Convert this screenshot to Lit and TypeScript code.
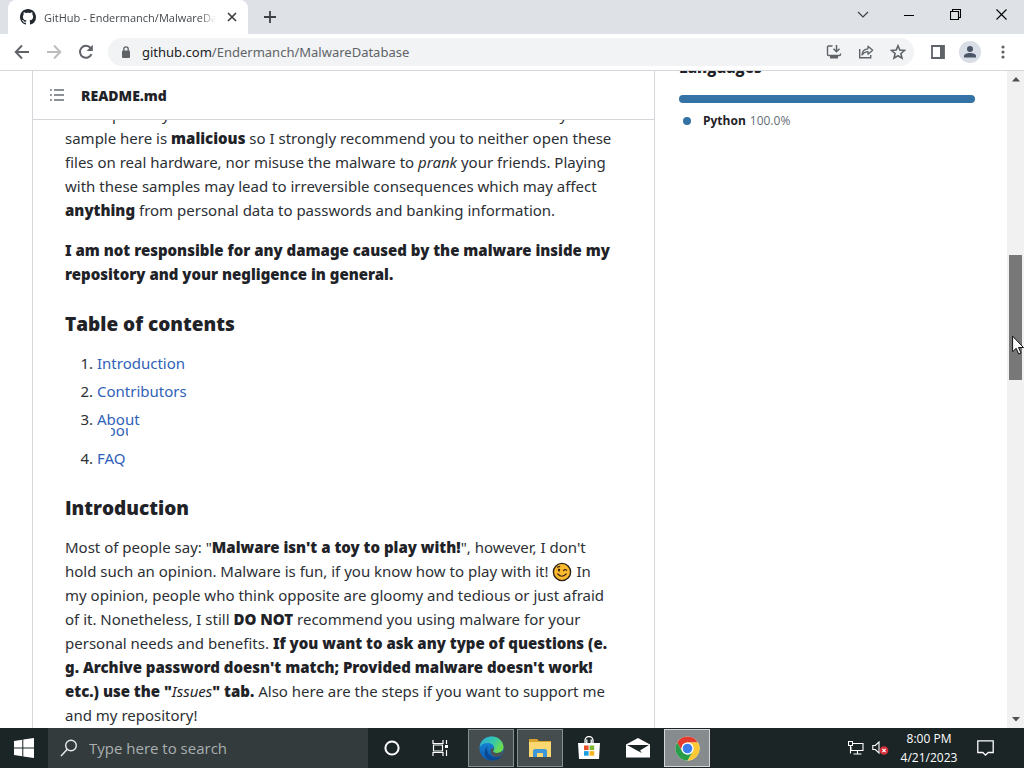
import { LitElement, html, css, svg } from "lit";
import { customElement } from "lit/decorators.js";

const icon = (w: number, h: number, body: unknown) =>
  html`<svg width=${w} height=${h} viewBox="0 0 ${w} ${h}" fill="none" aria-hidden="true">${body}</svg>`;

const icons = {
  github: html`<svg width="16" height="16" viewBox="0 0 16 16" aria-hidden="true"><path fill="#24292f" d="M8 0C3.58 0 0 3.58 0 8c0 3.54 2.29 6.53 5.47 7.59.4.07.55-.17.55-.38 0-.19-.01-.82-.01-1.49-2.01.37-2.53-.49-2.69-.94-.09-.23-.48-.94-.82-1.13-.28-.15-.68-.52-.01-.53.63-.01 1.08.58 1.23.82.72 1.21 1.87.87 2.33.66.07-.52.28-.87.51-1.07-1.78-.2-3.64-.89-3.64-3.95 0-.87.31-1.59.82-2.15-.08-.2-.36-1.02.08-2.12 0 0 .67-.21 2.2.82.64-.18 1.32-.27 2-.27s1.36.09 2 .27c1.53-1.04 2.2-.82 2.2-.82.44 1.1.16 1.92.08 2.12.51.56.82 1.27.82 2.15 0 3.07-1.87 3.75-3.65 3.95.29.25.54.73.54 1.48 0 1.07-.01 1.93-.01 2.2 0 .21.15.46.55.38A8.01 8.01 0 0 0 16 8c0-4.42-3.58-8-8-8z"/></svg>`,
  close: icon(10, 10, svg`<path d="M1 1l8 8M9 1l-8 8" stroke="#3c4043" stroke-width="1.7"/>`),
  plus: icon(12, 12, svg`<path d="M6 0v12M0 6h12" stroke="#3c4043" stroke-width="1.8"/>`),
  chevron: icon(12, 8, svg`<path d="M1 1l5 5 5-5" stroke="#3c4043" stroke-width="1.2"/>`),
  min: icon(10, 10, svg`<path d="M0 5.500h10" stroke="#000"/>`),
  restore: icon(11, 11, svg`<path d="M.5 2.500h8v8h-8zM2.500 2.500v-2h8v8h-2" stroke="#000" stroke-width="1.1"/>`),
  winClose: icon(11, 11, svg`<path d="M.5.5l10 10M10.500.5l-10 10" stroke="#000" stroke-width="1.1"/>`),
  back: icon(16, 16, svg`<path d="M15 8H2M8 1.500L1.700 8 8 14.500" stroke="#5f6368" stroke-width="1.900"/>`),
  forward: icon(16, 16, svg`<path d="M1 8h13M8 1.500L14.300 8 8 14.500" stroke="#babcbe" stroke-width="1.900"/>`),
  reload: icon(16, 16, svg`<path d="M13.500 10.200A6 6 0 1 1 12.600 4" stroke="#5f6368" stroke-width="2"/><path d="M14.800.8V7H8.600z" fill="#5f6368"/>`),
  lock: icon(10, 12, svg`<rect x="1" y="4.500" width="8" height="7.500" rx="1" fill="#5f6368"/><path d="M2.800 5V3a2.200 2.200 0 0 1 4.400 0v2" stroke="#5f6368" stroke-width="1.300"/>`),
  install: icon(16, 16, svg`<path d="M6.500 2H2.500a1 1 0 0 0-1 1v7.500a1 1 0 0 0 1 1h11a1 1 0 0 0 1-1V9.500" stroke="#5f6368" stroke-width="1.400"/><path d="M4 12h8v2.500H4z" fill="#5f6368"/><path d="M10.500 1v6.500M7.500 4.800l3 3 3-3" stroke="#5f6368" stroke-width="1.500"/>`),
  share: icon(16, 16, svg`<path d="M1.700 5v8.800h11V11" stroke="#5f6368" stroke-width="1.400"/><path d="M4 11c.3-4 2.300-6 6-6.200V2.200l4.700 4-4.700 4V7.600C7.200 7.700 5.600 8.700 4 11z" stroke="#5f6368" stroke-width="1.300" stroke-linejoin="round"/>`),
  star: icon(16, 16, svg`<path d="M8 1.800l1.800 4.300 4.700.4-3.600 3 1.100 4.600L8 11.700l-4 2.400 1.100-4.600-3.600-3 4.700-.4z" stroke="#5f6368" stroke-width="1.600"/>`),
  panel: icon(14, 14, svg`<path d="M1 1h12v12H1z" stroke="#5f6368" stroke-width="1.800"/><path d="M9 1h4v12H9z" fill="#5f6368"/>`),
  person: icon(22, 22, svg`<circle cx="11" cy="11" r="11" fill="#d8dde6"/><circle cx="11" cy="8" r="3" fill="#4a5568"/><path d="M5 16.500v-1.500c0-2 3-3 6-3s6 1 6 3v1.500z" fill="#4a5568"/>`),
  dots: icon(4, 14, svg`<g fill="#5f6368"><circle cx="2" cy="2" r="1.600"/><circle cx="2" cy="7" r="1.600"/><circle cx="2" cy="12" r="1.600"/></g>`),
  list: icon(16, 16, svg`<path d="M5 3h10M5 8h10M5 13h10" stroke="#656d76" stroke-width="1.300"/><path d="M1 3h1.800M1 8h1.800M1 13h1.800" stroke="#656d76" stroke-width="1.600"/>`),
  up: icon(8, 5, svg`<path d="M0 4.500L4 0l4 4.500z" fill="#505050"/>`),
  down: icon(8, 5, svg`<path d="M0 0l4 4.500L8 0z" fill="#505050"/>`),
  wink: html`<svg class="emoji" width="20" height="20" viewBox="0 0 20 20" role="img" aria-label="winking face"><circle cx="10" cy="10" r="8.600" fill="#fdb92e" stroke="#2b2416" stroke-width="1.400"/><ellipse cx="7" cy="8" rx="1.200" ry="1.600" fill="#3b2a12"/><path d="M11.500 8.500q1.500-1.600 3.200-.3M5.500 5.200q1-.9 2.200-.6M5.800 12q4 4.500 8.400 0" fill="none" stroke="#3b2a12" stroke-width="1.200" stroke-linecap="round"/></svg>`,
  windows: icon(20, 20, svg`<path fill="#fff" d="M0 3l8.300-1.200v7.700H0zM9.300 1.600L20 0v9.500H9.300zM0 10.500h8.300v7.700L0 17zM9.300 10.500H20V20L9.300 18.400z"/>`),
  search: icon(18, 18, svg`<circle cx="11" cy="6.500" r="5.300" stroke="#e8eaea" stroke-width="1.400"/><path d="M7.300 10.300L1 17" stroke="#e8eaea" stroke-width="1.500"/>`),
  cortana: icon(16, 16, svg`<circle cx="8" cy="8" r="6.600" stroke="#fff" stroke-width="2"/>`),
  taskview: icon(17, 16, svg`<path d="M1 0v3.500h10V0M1 16v-3.500h10V16M1.500 5h9v6h-9zM14.500 0v4M14.500 10v6" stroke="#fff" stroke-width="1.200"/><path d="M13 5h3v3h-3z" fill="#fff"/>`),
  edge: icon(25, 25, svg`<defs><linearGradient id="eg" x1="0" y1="0" x2="1" y2=".5"><stop offset="0" stop-color="#2aa9e0"/><stop offset=".6" stop-color="#38c9a8"/><stop offset="1" stop-color="#6bdc4e"/></linearGradient><linearGradient id="eb" x1="0" y1="0" x2="0" y2="1"><stop offset="0" stop-color="#1b8fdd"/><stop offset="1" stop-color="#0c59b0"/></linearGradient></defs><circle cx="12.500" cy="12.500" r="12" fill="url(#eb)"/><path d="M.6 11.500C1 5 6.500.5 12.500.5c7 0 12 5 12 10.500 0 4-3 6-6.500 6-2.500 0-4-.8-4-1.500s1.200-1.300 1.200-3.500c0-2.500-2.500-5-6.500-5-4 0-7 2-8.100 4.500z" fill="url(#eg)"/><path d="M9 9.500c-3 4.500.5 12 8.500 12 2 0 3.500-.5 5.300-1.700-2 3.200-6 5-10.300 4.700C5.500 24 3 15 9 9.500z" fill="#0a4a94"/><path d="M14 15.500c0 .8 1.500 1.500 4 1.500 2 0 4-.7 5-2 1 1-.5 4-2 5-5 2.500-10-.5-9.500-5.500.3-1.500 1-2.500 2-2.500 1.500 0 1.700 1.500.5 3.500z" fill="#4b5355"/>`),
  folder: icon(24, 20, svg`<path d="M1 1h8l2 2h12v5H1z" fill="#d9a12e"/><path d="M1 4h22v15H1z" fill="#fbd870"/><path d="M5 19v-6a2 2 0 0 1 2-2h10a2 2 0 0 1 2 2v6h-4v-4H9v4z" fill="#3f97d8"/>`),
  store: icon(24, 24, svg`<path d="M8 7V4.500a4 4 0 0 1 8 0V7M9.800 7V3.500M14.200 7V3.500" stroke="#fff" stroke-width="1.300"/><path d="M1 7h22l-1 16H2z" fill="#fff"/><path d="M7 9.500h4.600v4.600H7z" fill="#e8502c"/><path d="M12.600 9.500h4.600v4.600h-4.600z" fill="#7db72f"/><path d="M7 15.100h4.600v4.600H7z" fill="#1c9fe0"/><path d="M12.600 15.100h4.600v4.600h-4.600z" fill="#f6b51e"/>`),
  mail: icon(24, 20, svg`<path d="M0 6.500L12 0l12 6.500V19.500H0z" fill="#fff"/><path d="M1 7h22l-9 5.500 2 2.500-5-2.500z" fill="#1b2526"/>`),
  chrome: icon(25, 25, svg`<circle cx="12.500" cy="12.500" r="12" fill="#fff"/><path d="M2.100 6.500A12 12 0 0 1 22.900 6.500H12.500a6 6 0 0 0-5.200 9z" fill="#e33b2e"/><path d="M22.900 6.500A12 12 0 0 1 12.500 24.500l5.200-9a6 6 0 0 0-5.200-9z" fill="#fcc934"/><path d="M2.100 6.500A12 12 0 0 0 12.500 24.500l5.200-9a6 6 0 0 1-10.400 0z" fill="#2a9d4a"/><circle cx="12.500" cy="12.500" r="6" fill="#fff"/><circle cx="12.500" cy="12.500" r="4.800" fill="#3b7ded"/>`),
  network: icon(16, 14, svg`<path d="M4 2.500h11v7H3V6M9.500 9.500v3.500M5.500 13h8M.5.500h4v4h-4zM2.500 4.500v8" stroke="#fff" stroke-width="1.100"/>`),
  volume: icon(17, 14, svg`<path d="M.8 4.500h2.500L7 1v11L3.300 8.500H.8z" stroke="#fff" stroke-width="1.100"/><circle cx="12" cy="9.500" r="4.300" fill="#d5303a"/><path d="M10.300 7.800l3.400 3.400M13.700 7.800l-3.400 3.400" stroke="#fff" stroke-width="1.200"/>`),
  notice: icon(17, 17, svg`<path d="M.8.8h15.400v11.700h-5L8.500 15.200l-2.700-2.700h-5z" stroke="#fff" stroke-width="1.300"/>`),
  cursor: html`<svg class="cursor" width="12" height="20" viewBox="0 0 12 20" aria-hidden="true"><path d="M.6 1.200v15.500l3.600-3.400 2.500 5.700 2.300-1-2.500-5.500h5z" fill="#fff" stroke="#111"/></svg>`,
};

@customElement("app-root")
export class AppRoot extends LitElement {
  static styles = css`
    :host {
      display: flex;
      flex-direction: column;
      height: 100vh;
      overflow: hidden;
      background: #fff;
      color: #1f2328;
      font-family: "Open Sans", "Noto Sans", sans-serif;
      font-size: 15px;
    }
    * { box-sizing: border-box; }
    svg { display: block; flex: none; }
    button {
      display: grid;
      place-items: center;
      flex: none;
      padding: 0;
      border: 0;
      background: none;
      font: inherit;
      color: inherit;
    }
    .tabs { display: flex; flex: none; height: 34px; padding-left: 8px; background: #dee1e6; }
    .tab {
      display: flex;
      align-items: center;
      width: 240px;
      padding: 0 6px 0 12px;
      border-radius: 8px 8px 0 0;
      background: #fff;
      font-size: 11px;
      color: #45494d;
    }
    .tab-title {
      flex: 1;
      margin-left: 8px;
      overflow: hidden;
      white-space: nowrap;
      mask-image: linear-gradient(to left, transparent, #000 16px);
    }
    .tab-close { width: 20px; height: 20px; margin-left: 6px; }
    .new-tab { width: 28px; margin-left: 8px; }
    .window { display: flex; margin-left: auto; padding-bottom: 5px; }
    .window button { width: 46px; }
    .toolbar {
      display: flex;
      align-items: center;
      flex: none;
      height: 37px;
      padding: 0 5px 0 6px;
      border-bottom: 1px solid #d5d7da;
      background: #fff;
    }
    .toolbar > button { width: 32px; height: 32px; }
    .toolbar > .menu { width: 33px; }
    .omnibox {
      display: flex;
      align-items: center;
      flex: 1;
      height: 28px;
      margin: 0 8px 0 6px;
      padding: 0 0 0 13px;
      border-radius: 14px;
      background: #f1f3f4;
    }
    .omnibox button { width: 32px; height: 28px; }
    .url { flex: 1; margin-left: 11px; font-family: "Noto Sans", sans-serif; font-size: 13px; color: #5f6368; }
    .url b { font-weight: 400; color: #202124; }
    .viewport { display: flex; flex: 1; min-height: 0; }
    .page {
      display: grid;
      grid-template-columns: minmax(0, 1fr) 296px;
      gap: 24px;
      flex: 1;
      padding: 0 32px;
      overflow: hidden;
    }
    .readme { display: flex; flex-direction: column; min-height: 0; border: solid #d3d6da; border-width: 0 1px; }
    .readme-head {
      display: flex;
      align-items: center;
      flex: none;
      gap: 16px;
      height: 49px;
      padding: 0 16px;
      border-bottom: 1px solid #d3d6da;
    }
    .readme-head h2 { margin: 0; font-size: 14px; font-weight: 800; }
    .clip { flex: 1; min-height: 0; overflow: hidden; }
    .article {
      margin-top: -18px;
      padding: 0 32px;
      font-family: "Noto Sans", sans-serif;
      font-size: 15px;
      line-height: 24px;
      white-space: nowrap;
      color: #2c3035;
    }
    .article p { margin: 0 0 16px; }
    .article strong { font-weight: 900; color: #1f2328; }
    .article strong em { font-weight: 400; }
    .article h3 { margin: 26px 0 14px; font-family: "Open Sans", sans-serif; font-size: 19px; font-weight: 800; line-height: 25px; color: #1f2328; }
    .article ol { margin: 0; padding-left: 32px; }
    .article li + li { margin-top: 4px; }
    .article .torn { position: relative; padding-bottom: 11px; }
    .article a, .ghost { color: #2f62b8; text-decoration: none; }
    .ghost { position: absolute; left: 14px; top: 19px; width: 17px; height: 10px; overflow: hidden; }
    .ghost span { display: block; margin: -8px 0 0 -14px; }
    .emoji { display: inline-block; vertical-align: -5px; }
    .languages { margin-top: -15px; }
    .languages h2 { margin: 0 0 17px; font-size: 15px; font-weight: 800; line-height: 22px; }
    .bar { height: 8px; border-radius: 6px; background: #3572a5; }
    .lang { display: flex; align-items: center; gap: 4px; margin: 8px 0 0; font-size: 12px; line-height: 20px; color: #656d76; }
    .lang::before { content: ""; width: 8px; height: 8px; margin: 0 8px 0 4px; border-radius: 50%; background: #3572a5; }
    .lang b { color: #1f2328; }
    .scroll {
      position: relative;
      display: flex;
      flex-direction: column;
      flex: none;
      width: 17px;
      background: #f1f1f1;
    }
    .scroll button { width: 17px; height: 17px; }
    .track { flex: 1; padding: 0 2px; }
    .thumb { height: 20%; margin-top: 167px; background: #787878; }
    .cursor { position: absolute; left: 5px; top: 264px; }
    .taskbar { display: flex; flex: none; height: 40px; background: #1b2526; color: #fff; }
    .start { width: 48px; }
    .search { display: flex; align-items: center; width: 320px; padding: 0 12px; gap: 11px; background: #333b3d; }
    .search input {
      flex: 1;
      min-width: 0;
      padding: 0;
      border: 0;
      outline: 0;
      background: none;
      font-family: inherit;
      font-size: 15px;
      color: #fff;
    }
    .search input::placeholder { color: #a9afb0; opacity: 1; }
    .apps { display: flex; flex: 1; }
    .apps button { width: 49px; border: solid transparent; border-width: 1px 0; }
    .apps .system { width: 48px; }
    .apps .system + .open { margin-left: 4px; }
    .apps .open { width: 46px; margin: 1px 1px 1px 2px; border: 1px solid #879091; background: #454d4f; }
    .apps .active { border-color: #d4d6d7; background: #868b8d; }
    .tray { display: flex; align-items: center; }
    .tray button { width: 24px; height: 40px; }
    .clock { width: 74px; text-align: center; font-size: 12px; line-height: 19px; }
    .tray .notice { width: 38px; margin-right: 20px; }
  `;

  render() {
    return html`
      <header class="tabs">
        <div class="tab">
          ${icons.github}<span class="tab-title">GitHub - Endermanch/MalwareDatabase</span>
          <button class="tab-close" aria-label="Close tab">${icons.close}</button>
        </div>
        <button class="new-tab" aria-label="New tab">${icons.plus}</button>
        <div class="window">
          <button aria-label="Search tabs">${icons.chevron}</button>
          <button aria-label="Minimize">${icons.min}</button>
          <button aria-label="Restore">${icons.restore}</button>
          <button aria-label="Close">${icons.winClose}</button>
        </div>
      </header>
      <nav class="toolbar">
        <button aria-label="Back">${icons.back}</button>
        <button aria-label="Forward">${icons.forward}</button>
        <button aria-label="Reload">${icons.reload}</button>
        <div class="omnibox">
          ${icons.lock}
          <span class="url"><b>github.com</b>/Endermanch/MalwareDatabase</span>
          <button aria-label="Install">${icons.install}</button>
          <button aria-label="Share">${icons.share}</button>
          <button aria-label="Bookmark">${icons.star}</button>
        </div>
        <button aria-label="Side panel">${icons.panel}</button>
        <button aria-label="Profile">${icons.person}</button>
        <button class="menu" aria-label="Menu">${icons.dots}</button>
      </nav>
      <div class="viewport">
        <main class="page">
          <section class="readme">
            <div class="readme-head">${icons.list}<h2>README.md</h2></div>
            <div class="clip">
              <article class="article">
                <p>
                  This repository is one of a few malware collections on the GitHub. Every<br />
                  sample here is <strong>malicious</strong> so I strongly recommend you to neither open these<br />
                  files on real hardware, nor misuse the malware to <em>prank</em> your friends. Playing<br />
                  with these samples may lead to irreversible consequences which may affect<br />
                  <strong>anything</strong> from personal data to passwords and banking information.
                </p>
                <p>
                  <strong>I am not responsible for any damage caused by the malware inside my<br />
                  repository and your negligence in general.</strong>
                </p>
                <h3>Table of contents</h3>
                <ol>
                  <li><a href="#introduction">Introduction</a></li>
                  <li><a href="#contributors">Contributors</a></li>
                  <li class="torn">
                    <a href="#about">About</a>
                    <div class="ghost" aria-hidden="true"><span>About</span></div>
                  </li>
                  <li><a href="#faq">FAQ</a></li>
                </ol>
                <h3 id="introduction">Introduction</h3>
                <p>
                  Most of people say: "<strong>Malware isn't a toy to play with!</strong>", however, I don't<br />
                  hold such an opinion. Malware is fun, if you know how to play with it! ${icons.wink} In<br />
                  my opinion, people who think opposite are gloomy and tedious or just afraid<br />
                  of it. Nonetheless, I still <strong>DO NOT</strong> recommend you using malware for your<br />
                  personal needs and benefits. <strong>If you want to ask any type of questions (e.<br />
                  g. Archive password doesn't match; Provided malware doesn't work!<br />
                  etc.) use the "<em>Issues</em>" tab.</strong> Also here are the steps if you want to support me<br />
                  and my repository!
                </p>
              </article>
            </div>
          </section>
          <aside class="languages">
            <h2>Languages</h2>
            <div class="bar"></div>
            <p class="lang"><b>Python</b><span>100.0%</span></p>
          </aside>
        </main>
        <div class="scroll">
          <button aria-label="Scroll up">${icons.up}</button>
          <div class="track"><div class="thumb"></div></div>
          <button aria-label="Scroll down">${icons.down}</button>
          ${icons.cursor}
        </div>
      </div>
      <footer class="taskbar">
        <button class="start" aria-label="Start">${icons.windows}</button>
        <label class="search">${icons.search}<input type="text" aria-label="Search" placeholder="Type here to search" /></label>
        <div class="apps">
          <button class="system" aria-label="Cortana">${icons.cortana}</button>
          <button class="system" aria-label="Task View">${icons.taskview}</button>
          <button class="open" aria-label="Edge">${icons.edge}</button>
          <button class="open" aria-label="File Explorer">${icons.folder}</button>
          <button aria-label="Store">${icons.store}</button>
          <button aria-label="Mail">${icons.mail}</button>
          <button class="open active" aria-label="Chrome">${icons.chrome}</button>
        </div>
        <div class="tray">
          <button aria-label="Network">${icons.network}</button>
          <button aria-label="Volume">${icons.volume}</button>
          <div class="clock">8:00 PM<br />4/21/2023</div>
          <button class="notice" aria-label="Notifications">${icons.notice}</button>
        </div>
      </footer>
    `;
  }
}
